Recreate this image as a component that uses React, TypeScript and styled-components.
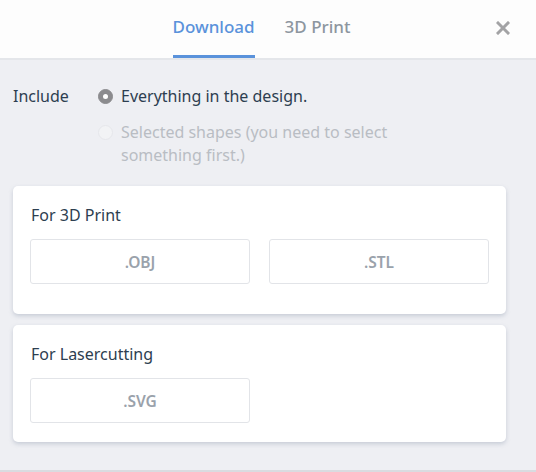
import styled, { createGlobalStyle } from "styled-components";

const GlobalStyles = createGlobalStyle`
  html, body {
    margin: 0;
    padding: 0;
    background: #eeeff3;
  }
  body {
    font-family: "Noto Sans", "Open Sans", sans-serif;
  }
  * {
    box-sizing: border-box;
  }
`;

const Panel = styled.div`
  width: 536px;
  height: 472px;
  background: #eeeff3;
  border-bottom: 2px solid #d9dbe0;
  display: flex;
  flex-direction: column;
`;

const Header = styled.header`
  height: 60px;
  background: #fdfdfd;
  border-bottom: 2px solid #e4e6ea;
  display: flex;
  justify-content: center;
  position: relative;
`;

const Tabs = styled.nav`
  display: flex;
  gap: 30px;
  height: 100%;
  margin-right: 13px;
`;

const Tab = styled.div<{ $active?: boolean }>`
  height: 100%;
  display: flex;
  align-items: center;
  padding-bottom: 3px;
  font-size: 17px;
  font-weight: 500;
  color: ${(p) => (p.$active ? "#5a92db" : "#8d969f")};
  border-bottom: 3px solid ${(p) => (p.$active ? "#5a92db" : "transparent")};
  margin-bottom: -2px;
`;

const CloseButton = styled.button`
  position: absolute;
  right: 24px;
  top: 19px;
  width: 18px;
  height: 18px;
  padding: 0;
  border: none;
  background: none;
  display: flex;
  align-items: center;
  justify-content: center;
`;

const Body = styled.div`
  padding: 25px 30px 0 13px;
  display: flex;
  flex-direction: column;
`;

const IncludeRow = styled.div`
  display: grid;
  grid-template-columns: 85px 1fr;
  margin-bottom: 19px;
`;

const Label = styled.div`
  font-size: 16px;
  line-height: 23px;
  color: #2d3e50;
`;

const Options = styled.div`
  display: flex;
  flex-direction: column;
  gap: 13px;
`;

const Option = styled.label<{ $disabled?: boolean }>`
  display: flex;
  gap: 8px;
  font-size: 16px;
  line-height: 23px;
  white-space: nowrap;
  color: ${(p) => (p.$disabled ? "#b9bdc3" : "#2d3e50")};
`;

const Radio = styled.span<{ $checked?: boolean; $disabled?: boolean }>`
  flex: none;
  width: 15px;
  height: 15px;
  margin-top: 4px;
  border-radius: 50%;
  background: ${(p) => (p.$checked ? "#8b8b8e" : "#f2f3f5")};
  border: 1px solid ${(p) => (p.$checked ? "#8b8b8e" : "#e6e7eb")};
  display: flex;
  align-items: center;
  justify-content: center;
  &::after {
    content: "";
    display: ${(p) => (p.$checked ? "block" : "none")};
    width: 5px;
    height: 5px;
    border-radius: 50%;
    background: #fff;
  }
`;

const Card = styled.section<{ $bottom: number }>`
  background: #fff;
  border-radius: 5px;
  box-shadow: 0 2px 4px rgba(150, 162, 180, 0.45);
  padding: 18px 17px ${(p) => p.$bottom}px;
  margin-bottom: 11px;
`;

const CardTitle = styled.h3`
  margin: 0 0 12px 1px;
  font-size: 16px;
  line-height: 23px;
  font-weight: 400;
  color: #2d3e50;
`;

const ButtonRow = styled.div`
  display: grid;
  grid-template-columns: 220px 220px;
  gap: 19px;
`;

const FormatButton = styled.button`
  height: 45px;
  background: #fff;
  border: 1px solid #e2e4e8;
  border-radius: 3px;
  font-family: inherit;
  font-size: 15.5px;
  font-weight: 600;
  color: #9aa2ab;
`;

function CloseIcon() {
  return (
    <svg width="14" height="14" viewBox="0 0 14 14">
      <path
        d="M2 2 L12 12 M12 2 L2 12"
        stroke="#a3a3a5"
        strokeWidth="3"
        strokeLinecap="square"
      />
    </svg>
  );
}

export default function App() {
  return (
    <Panel>
      <GlobalStyles />
      <Header>
        <Tabs>
          <Tab $active>Download</Tab>
          <Tab>3D Print</Tab>
        </Tabs>
        <CloseButton aria-label="Close">
          <CloseIcon />
        </CloseButton>
      </Header>
      <Body>
        <IncludeRow>
          <Label>Include</Label>
          <Options>
            <Option>
              <Radio $checked />
              Everything in the design.
            </Option>
            <Option $disabled>
              <Radio $disabled />
              <span>
                Selected shapes (you need to select
                <br />
                something first.)
              </span>
            </Option>
          </Options>
        </IncludeRow>
        <Card $bottom={30}>
          <CardTitle>For 3D Print</CardTitle>
          <ButtonRow>
            <FormatButton>.OBJ</FormatButton>
            <FormatButton>.STL</FormatButton>
          </ButtonRow>
        </Card>
        <Card $bottom={19}>
          <CardTitle>For Lasercutting</CardTitle>
          <ButtonRow>
            <FormatButton>.SVG</FormatButton>
          </ButtonRow>
        </Card>
      </Body>
    </Panel>
  );
}
